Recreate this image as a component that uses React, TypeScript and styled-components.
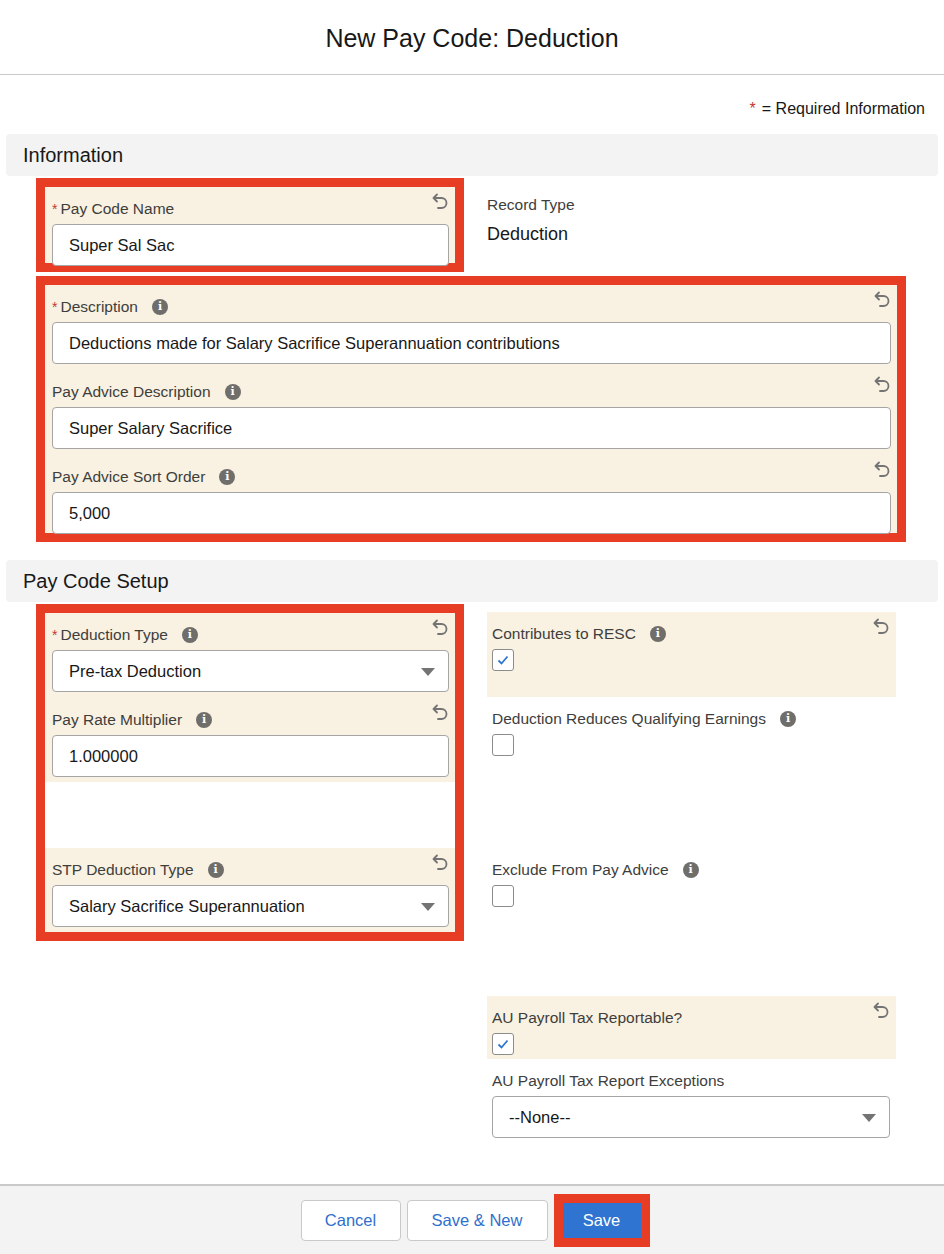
import React from "react";
import styled, { createGlobalStyle } from "styled-components";

const Global = createGlobalStyle`
  body { margin: 0; font-family: "Liberation Sans", Arial, sans-serif; color: #181818; background: #fff; }
  * { box-sizing: border-box; }
`;

const Page = styled.div`
  width: 944px; min-height: 1254px; display: flex; flex-direction: column;
`;
const Header = styled.div`
  height: 75px; border-bottom: 1px solid #c9c9c9; display: flex; align-items: center; justify-content: center;
  font-size: 25px; padding-top: 2px;
`;
const Body = styled.div` padding: 25px 6px 0 6px; display: flex; flex-direction: column; `;
const Required = styled.div`
  text-align: right; font-size: 16px; padding-right: 13px; height: 34px;
  span { color: #c23934; margin-right: 6px; }
`;
const SectionTitle = styled.div`
  background: #f3f3f3; border-radius: 4px; height: 42px; display: flex; align-items: center;
  padding-left: 17px; font-size: 20px; margin-bottom: 2px;
`;
const Grid = styled.div`
  display: grid; grid-template-columns: 428px 409px; column-gap: 23px; padding-left: 30px; align-items: start;
`;
const RedBox = styled.div<{ $wide?: boolean }>`
  border: 9px solid #e63d24; display: flex; flex-direction: column;
  ${(p) => (p.$wide ? "grid-column: 1 / span 2; width: 870px; margin-top: 4px;" : "")}
`;
const Col = styled.div` padding-top: 8px; display: flex; flex-direction: column; `;
const Field = styled.div<{ $cream?: boolean; $h?: number; $pl?: number }>`
  position: relative;
  background: ${(p) => (p.$cream ? "#f9f1e1" : "transparent")};
  padding: 6px 6px 0 ${(p) => p.$pl ?? 7}px;
  height: ${(p) => p.$h ?? 85}px;
`;
const Spacer = styled.div<{ $h: number }>` height: ${(p) => p.$h}px; `;
const Label = styled.div`
  font-size: 15.5px; color: #3e3e3c; height: 24px; line-height: 24px; display: flex; align-items: center; margin-top: 4px; margin-bottom: 3px;
`;
const Star = styled.span` color: #c23934; margin-right: 3px; font-size: 14px; `;
const Info = styled.span`
  display: inline-flex; align-items: center; justify-content: center; width: 16px; height: 16px; border-radius: 50%;
  background: #706e6b; color: #fff; font-size: 11px; font-weight: bold; margin-left: 14px; font-family: "DejaVu Serif", serif;
`;
const Undo = styled.span` position: absolute; right: 6px; top: 5px; color: #747474; display: flex; `;
const Input = styled.div`
  height: 42px; border: 1px solid #a5a5a5; border-radius: 4px; background: #fff; display: flex; align-items: center;
  padding: 0 16px; font-size: 16.5px; color: #181818; position: relative;
`;
const Caret = styled.span`
  position: absolute; right: 13px; top: 17px; width: 0; height: 0;
  border-left: 7px solid transparent; border-right: 7px solid transparent; border-top: 8px solid #747474;
`;
const Check = styled.div`
  width: 22px; height: 22px; border: 1px solid #8c8c8c; border-radius: 3px; background: #fff; display: flex; align-items: center; justify-content: center;
`;
const StaticLabel = styled.div` font-size: 15.5px; color: #3e3e3c; padding-top: 18px; `;
const StaticValue = styled.div` font-size: 18px; padding-top: 10px; `;
const Footer = styled.div`
  margin-top: auto; height: 70px; border-top: 2px solid #c9c9c9; background: #f3f3f3;
  display: flex; justify-content: center; align-items: center; gap: 6px; padding-left: 6px;
`;
const Btn = styled.button<{ $w: number }>`
  height: 41px; width: ${(p) => p.$w}px; border: 1px solid #c9c9c9; border-radius: 4px; background: #fff;
  color: #2f6fcc; font-size: 16.5px; font-family: inherit;
`;
const SaveWrap = styled.div` border: 9px solid #e63d24; `;
const SaveBtn = styled.button`
  height: 35px; width: 78px; border: none; background: #2e74d0; color: #fff; font-size: 16.5px; font-family: inherit; display: block;
`;

const UndoIcon = () => (
  <Undo>
    <svg width="18" height="18" viewBox="0 0 18 18" fill="none" stroke="currentColor" strokeWidth="1.8" strokeLinecap="round" strokeLinejoin="round">
      <path d="M6 2.5 2.5 6 6 9.5" />
      <path d="M3 6h7.5a5 5 0 0 1 0 10H7" />
    </svg>
  </Undo>
);

const Tick = () => (
  <svg width="12" height="10" viewBox="0 0 12 10"><path d="M1.5 5.5 4.5 8.5 10.5 1.5" stroke="#2e74d0" strokeWidth="1.8" fill="none" /></svg>
);

type FP = { label: string; req?: boolean; info?: boolean; undo?: boolean; value?: string; select?: boolean; check?: boolean; checked?: boolean; cream?: boolean; h?: number; pl?: number };
const F = ({ label, req, info, undo, value, select, check, checked, cream, h, pl }: FP) => (
  <Field $cream={cream} $h={h} $pl={pl}>
    <Label>{req && <Star>*</Star>}{label}{info && <Info>i</Info>}</Label>
    {undo && <UndoIcon />}
    {check ? <Check>{checked && <Tick />}</Check> : <Input>{value}{select && <Caret />}</Input>}
  </Field>
);

export default function App() {
  return (
    <Page>
      <Global />
      <Header>New Pay Code: Deduction</Header>
      <Body>
        <Required><span>*</span>= Required Information</Required>
        <SectionTitle>Information</SectionTitle>
        <Grid>
          <RedBox><F label="Pay Code Name" req undo cream value="Super Sal Sac" h={76} /></RedBox>
          <div>
            <StaticLabel>Record Type</StaticLabel>
            <StaticValue>Deduction</StaticValue>
          </div>
          <RedBox $wide>
            <F label="Description" req info undo cream value="Deductions made for Salary Sacrifice Superannuation contributions" />
            <F label="Pay Advice Description" info undo cream value="Super Salary Sacrifice" />
            <F label="Pay Advice Sort Order" info undo cream value="5,000" h={78} />
          </RedBox>
        </Grid>
        <Spacer $h={18} />
        <SectionTitle>Pay Code Setup</SectionTitle>
        <Grid>
          <RedBox>
            <F label="Deduction Type" req info undo cream select value="Pre-tax Deduction" />
            <F label="Pay Rate Multiplier" info undo cream value="1.000000" h={84} />
            <Spacer $h={66} />
            <F label="STP Deduction Type" info undo cream select value="Salary Sacrifice Superannuation" h={84} />
          </RedBox>
          <Col>
            <F label="Contributes to RESC" info undo cream check checked pl={5} />
            <F label="Deduction Reduces Qualifying Earnings" info check pl={5} />
            <Spacer $h={66} />
            <F label="Exclude From Pay Advice" info check pl={5} />
            <Spacer $h={63} />
            <F label="AU Payroll Tax Reportable?" undo cream check checked pl={5} h={63} />
            <F label="AU Payroll Tax Report Exceptions" select value="--None--" pl={5} h={90} />
          </Col>
        </Grid>
      </Body>
      <Footer>
        <Btn $w={100}>Cancel</Btn>
        <Btn $w={141}>Save &amp; New</Btn>
        <SaveWrap><SaveBtn>Save</SaveBtn></SaveWrap>
      </Footer>
    </Page>
  );
}
